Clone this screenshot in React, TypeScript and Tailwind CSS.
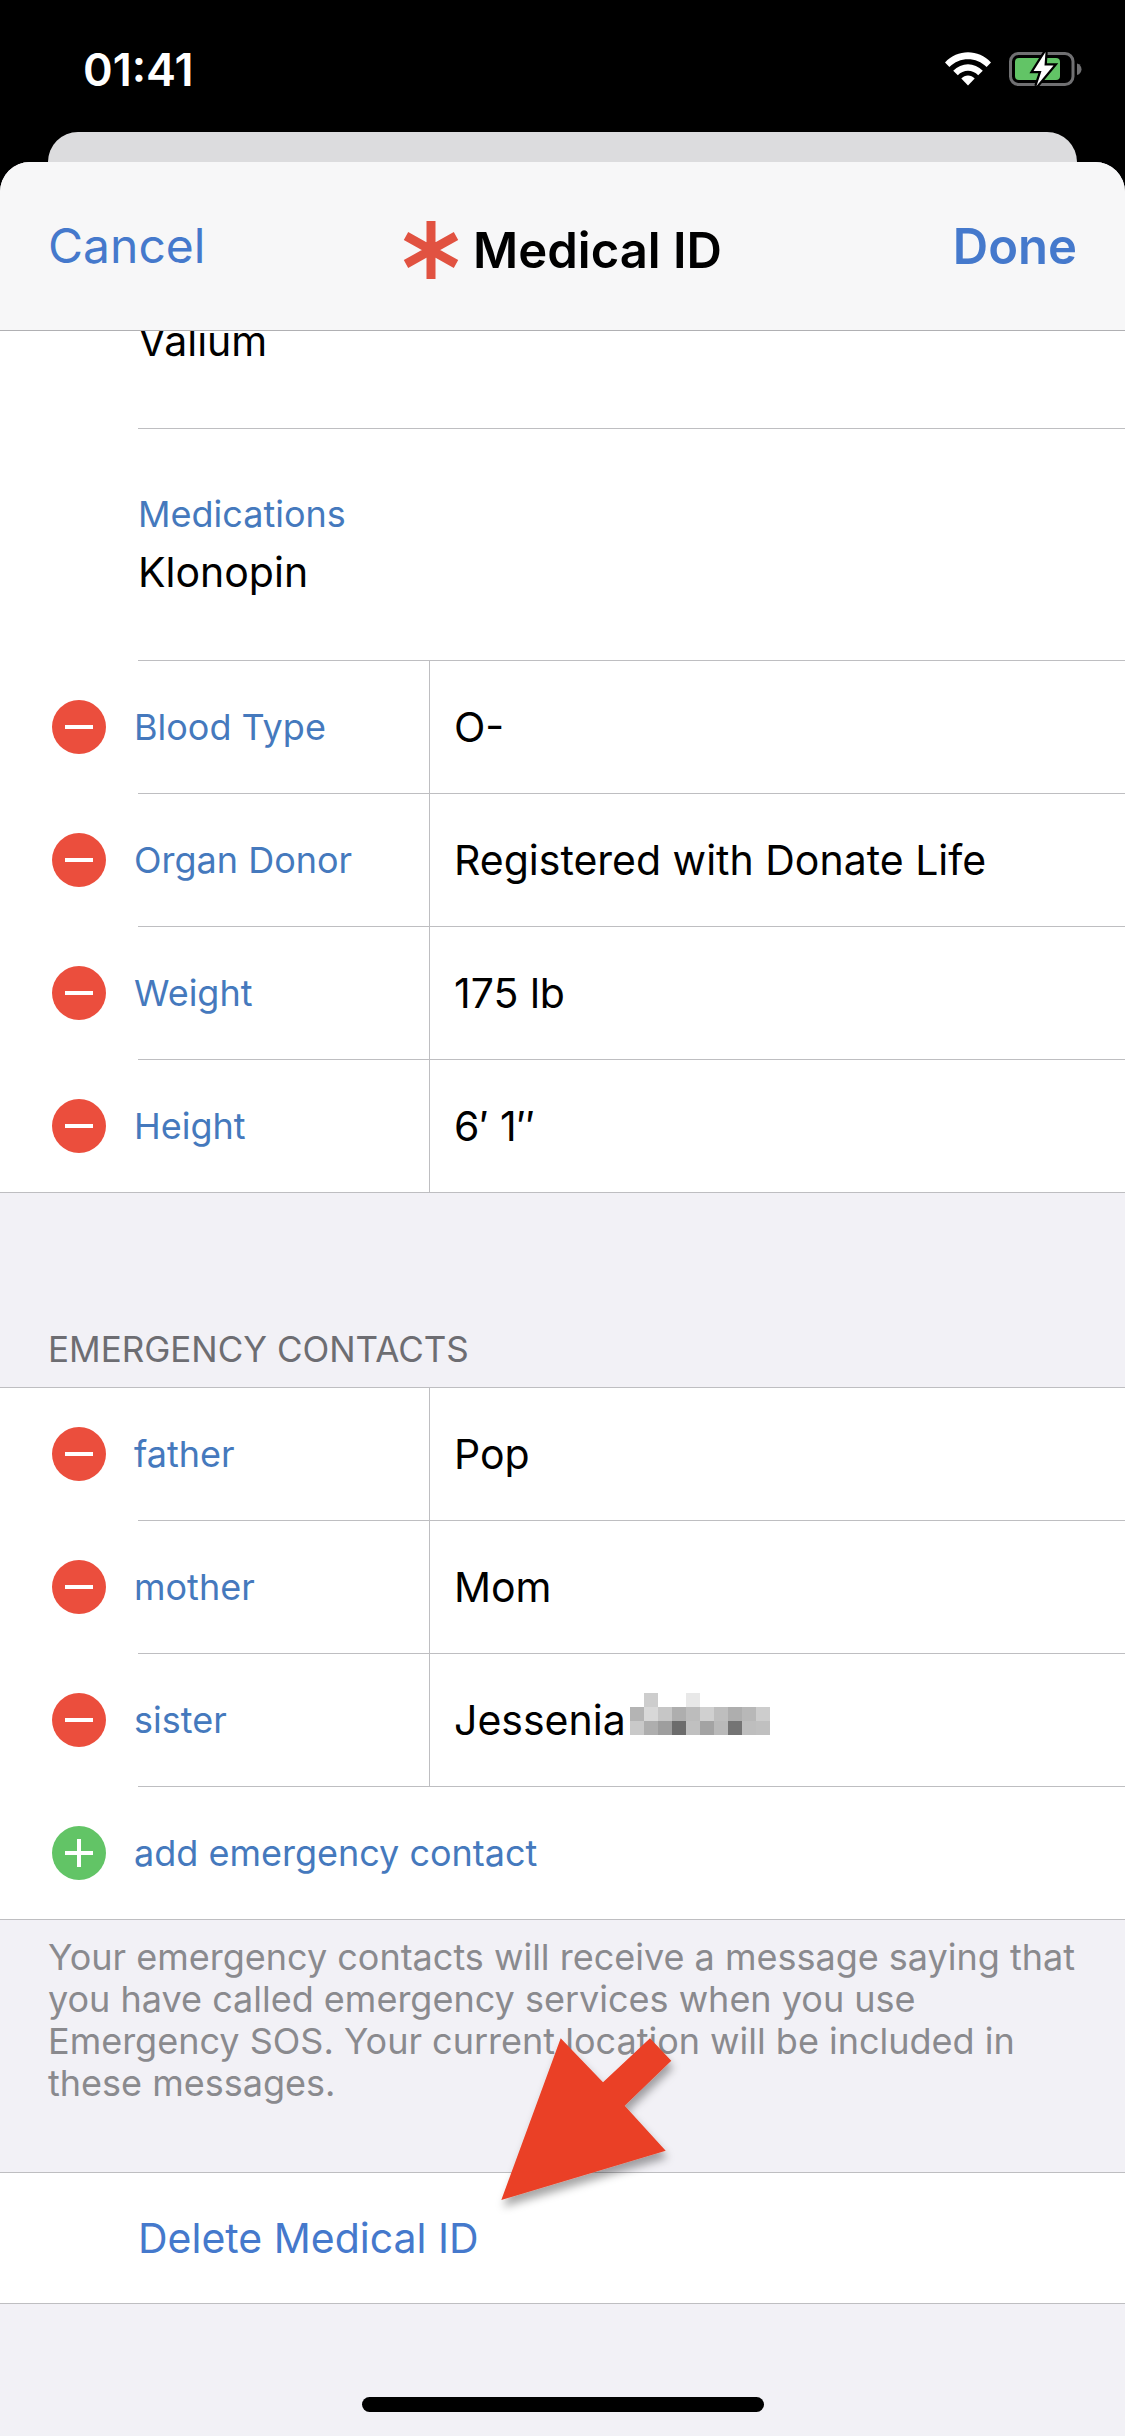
import type { ReactNode } from "react";

type Entry = { label: string; value: string; redacted?: boolean };

const details: Entry[] = [
  { label: "Blood Type", value: "O-" },
  { label: "Organ Donor", value: "Registered with Donate Life" },
  { label: "Weight", value: "175 lb" },
  { label: "Height", value: "6′ 1″" },
];

const contacts: Entry[] = [
  { label: "father", value: "Pop" },
  { label: "mother", value: "Mom" },
  { label: "sister", value: "Jessenia", redacted: true },
];

// Grey level of each mosaic cell, row by row
const mosaic = [
  [255, 205, 255, 255, 232, 255, 255, 255, 255, 255],
  [180, 216, 198, 174, 188, 208, 190, 174, 184, 205],
  [201, 174, 158, 108, 192, 163, 185, 116, 190, 192],
];

function IconWifi() {
  return (
    <svg className="w-[46px] h-[34px]" viewBox="0 0 46 34" fill="none" aria-hidden="true">
      <path d="M0 10.500C12.500-3.200 33.500-3.200 46 10.500L41.600 15C31.500 4.500 14.500 4.500 4.400 15Z" fill="white" />
      <path d="M8.200 18.800C16.500 10 29.500 10 37.800 18.800L33.200 23.300C27.700 17.300 18.300 17.300 12.800 23.300Z" fill="white" />
      <path d="M16.300 26.600C20 22.500 26 22.500 29.700 26.600L23 33.500Z" fill="white" />
    </svg>
  );
}

function IconBattery() {
  return (
    <svg className="w-[73px] h-[36px]" viewBox="0 0 73 36" fill="none" aria-hidden="true">
      <rect x="1.500" y="2.500" width="62.500" height="31" rx="8" stroke="#707072" strokeWidth="3" />
      <path d="M68 12.500C74 14 74 22.500 68 24Z" fill="#707072" />
      <rect x="6" y="7" width="45" height="22" rx="4" fill="#62c466" />
      <path
        d="M36.500 1L24.500 20H32.500L27.500 35L44.500 14.500H35.500Z"
        fill="white"
        stroke="black"
        strokeWidth="4.500"
        paintOrder="stroke"
      />
    </svg>
  );
}

function IconAsterisk() {
  return (
    <svg className="w-[56px] h-[58px]" viewBox="0 0 56 58" fill="none" stroke="#e15241" strokeWidth="9" aria-hidden="true">
      <path d="M28 0V58M3 15L53 43M3 43L53 15" />
    </svg>
  );
}

function RoundButton({ kind, label }: { kind: "remove" | "add"; label: string }) {
  return (
    <button
      aria-label={label}
      className={`shrink-0 size-[54px] rounded-full ${kind === "add" ? "bg-[#62c466]" : "bg-[#eb4e3d]"}`}
    >
      <svg viewBox="0 0 54 54" fill="none" stroke="white" strokeWidth="4" aria-hidden="true">
        {kind === "add" ? <path d="M13 27H41M27 13V41" /> : <path d="M13 27H41" />}
      </svg>
    </button>
  );
}

function Divider({ full }: { full?: boolean }) {
  return <div className={`h-px bg-[#bebec1] ${full ? "" : "ml-[138px]"}`} />;
}

function Redaction() {
  return (
    <span className="grid grid-cols-10 w-[140px] ml-1 mb-3" aria-hidden="true">
      {mosaic.flat().map((v, i) => (
        <span key={i} className="h-[14px]" style={{ backgroundColor: `rgb(${v}, ${v}, ${v})` }} />
      ))}
    </span>
  );
}

function EntryRow({ entry }: { entry: Entry }) {
  return (
    <div className="flex h-[132px]">
      <div className="flex items-center gap-7 w-[430px] pl-[52px] border-r border-[#bebec1] shrink-0">
        <RoundButton kind="remove" label={`Remove ${entry.label}`} />
        <span className="text-[36px] text-[#4579bd]">{entry.label}</span>
      </div>
      <div className="flex flex-1 items-center pl-6 text-[41px]">
        {entry.value}
        {entry.redacted && <Redaction />}
      </div>
    </div>
  );
}

function EntryList({ entries, children }: { entries: Entry[]; children?: ReactNode }) {
  return (
    <section className="bg-white">
      {entries.map((entry, i) => (
        <div key={entry.label}>
          {i > 0 && <Divider />}
          <EntryRow entry={entry} />
        </div>
      ))}
      {children}
    </section>
  );
}

function Arrow() {
  return (
    <svg
      className="absolute left-[490px] top-[110px] w-[200px] h-[190px] pointer-events-none"
      viewBox="490 2030 200 190"
      aria-hidden="true"
    >
      <defs>
        <filter id="arrow-shadow" x="-20%" y="-20%" width="140%" height="140%">
          <feDropShadow dx="2" dy="7" stdDeviation="4" floodColor="#000" floodOpacity="0.35" />
        </filter>
      </defs>
      <path
        d="M560.700 2038.300L603 2082.300L650 2038.300L671.300 2060.700L624.700 2105.700L665.700 2150.700L501.300 2200Z"
        fill="#ea4025"
        filter="url(#arrow-shadow)"
      />
    </svg>
  );
}

export default function App() {
  return (
    <div className="min-h-screen flex flex-col bg-black font-['Inter','Liberation_Sans',sans-serif] text-black leading-none">
      {/* Status bar */}
      <div className="flex items-center justify-between h-[132px] pl-[83px] pr-[43px] pt-1.5 text-white">
        <span className="text-[45px] font-semibold">01:41</span>
        <div className="flex items-center gap-[18px]">
          <IconWifi />
          <IconBattery />
        </div>
      </div>

      {/* Edge of the sheet behind */}
      <div className="mx-12 h-[30px] rounded-t-[30px] bg-[#dcdcde]" />

      <div className="flex flex-1 flex-col rounded-t-[30px] overflow-hidden bg-[#f2f1f6]">
        <header className="relative z-10 grid grid-cols-[1fr_auto_1fr] items-center h-[169px] px-12 border-b border-[#b0b0b3] bg-[#f7f7f8]">
          <button className="justify-self-start text-[48px] text-[#4579cc]">Cancel</button>
          <h1 className="flex items-center gap-3.5 pt-2 text-[49px] font-semibold">
            <IconAsterisk />
            Medical ID
          </h1>
          <button className="justify-self-end text-[49px] font-semibold text-[#4579cc]">Done</button>
        </header>

        <section className="bg-white">
          {/* Scrolled partly under the header */}
          <div className="flex items-end h-[98px] -mt-px pl-[138px] pb-[66px] text-[41px]">Valium</div>
          <Divider />
          <div className="flex flex-col justify-center gap-5 h-[231px] pl-[138px]">
            <span className="text-[36px] text-[#4579bd]">Medications</span>
            <span className="text-[41px]">Klonopin</span>
          </div>
          <Divider />
        </section>

        <EntryList entries={details} />
        <Divider full />

        <h2 className="flex items-end h-[194px] px-12 pb-5 text-[35px] text-[#6d6d72]">EMERGENCY CONTACTS</h2>
        <Divider full />

        <EntryList entries={contacts}>
          <Divider />
          <div className="flex items-center gap-7 h-[132px] pl-[52px]">
            <RoundButton kind="add" label="Add" />
            <button className="text-[36px] text-[#4579bd]">add emergency contact</button>
          </div>
        </EntryList>
        <Divider full />

        <div className="relative">
          <p className="h-[252px] px-12 pt-4 text-[36px] leading-[42px] text-[#8a8a8e]">
            Your emergency contacts will receive a message saying that you have called emergency services when you use
            Emergency SOS. Your current location will be included in these messages.
          </p>
          <Arrow />
        </div>
        <Divider full />

        <button className="h-[130px] pl-[138px] bg-white text-left text-[41px] text-[#4579cc]">Delete Medical ID</button>
        <Divider full />

        {/* Home indicator */}
        <div className="flex flex-1 items-end justify-center pb-6">
          <div className="w-[402px] h-[15px] rounded-full bg-black" />
        </div>
      </div>
    </div>
  );
}
